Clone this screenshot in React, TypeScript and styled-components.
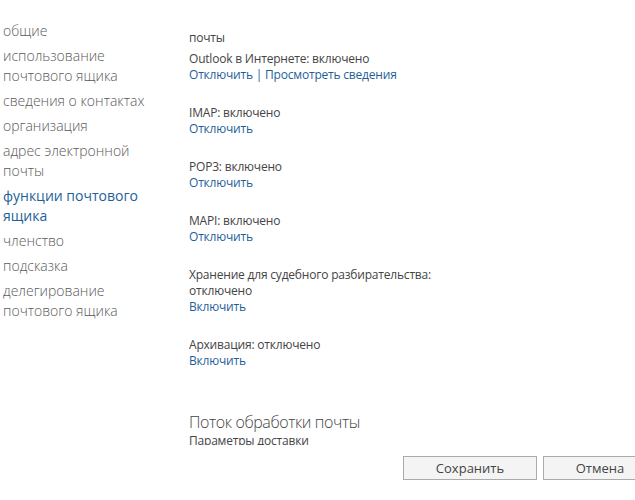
import styled, { createGlobalStyle } from 'styled-components';

const GlobalStyle = createGlobalStyle`
  html, body {
    margin: 0;
    padding: 0;
    background: #ffffff;
  }
  body {
    font-family: 'Open Sans', 'Noto Sans', sans-serif;
    color: #333333;
    overflow: hidden;
  }
`;

type Feature = {
  label: string;
  status?: string;
  actions: string[];
};

const navItems = [
  'общие',
  'использование почтового ящика',
  'сведения о контактах',
  'организация',
  'адрес электронной почты',
  'функции почтового ящика',
  'членство',
  'подсказка',
  'делегирование почтового ящика',
];

const activeNav = 'функции почтового ящика';

const features: Feature[] = [
  { label: 'Outlook в Интернете: включено', actions: ['Отключить', 'Просмотреть сведения'] },
  { label: 'IMAP: включено', actions: ['Отключить'] },
  { label: 'POP3: включено', actions: ['Отключить'] },
  { label: 'MAPI: включено', actions: ['Отключить'] },
  { label: 'Хранение для судебного разбирательства:', status: 'отключено', actions: ['Включить'] },
  { label: 'Архивация: отключено', actions: ['Включить'] },
];

export default function App() {
  return (
    <>
      <GlobalStyle />
      <Page>
        <Body>
          <Nav>
            {navItems.map((item) => (
              <NavItem key={item} $active={item === activeNav}>
                {item}
              </NavItem>
            ))}
          </Nav>

          <Content>
            <SectionTail>почты</SectionTail>
            {features.map((f) => (
              <Feature key={f.label}>
                <Line>{f.label}</Line>
                {f.status && <Line>{f.status}</Line>}
                <Links>
                  {f.actions.map((a, i) => (
                    <span key={a}>
                      {i > 0 && ' | '}
                      <Link href="#">{a}</Link>
                    </span>
                  ))}
                </Links>
              </Feature>
            ))}
            <SectionTitle>Поток обработки почты</SectionTitle>
            <Line>Параметры доставки</Line>
          </Content>
        </Body>

        <Footer>
          <Button>Сохранить</Button>
          <Button $width={114}>Отмена</Button>
        </Footer>
      </Page>
    </>
  );
}

const Page = styled.div`
  width: 635px;
  height: 500px;
  display: grid;
  grid-template-rows: 445px 1fr;
  overflow: hidden;
`;

const Body = styled.div`
  display: grid;
  grid-template-columns: 189px 1fr;
  overflow: hidden;
`;

const Nav = styled.ul`
  list-style: none;
  margin: 0;
  padding: 21px 0 0 3px;
  display: flex;
  flex-direction: column;
  gap: 5px;
`;

const NavItem = styled.li<{ $active?: boolean }>`
  font-size: 14px;
  line-height: 20px;
  width: 150px;
  color: ${(p) => (p.$active ? '#1e5f99' : '#5a5a5a')};
  font-weight: ${(p) => (p.$active ? 400 : 300)};
`;

const Content = styled.div`
  padding-top: 30px;
  font-size: 12px;
  line-height: 16px;
  letter-spacing: -0.2px;
  overflow: hidden;
`;

const SectionTail = styled.div`
  color: #444444;
  margin-bottom: 5px;
`;

const Feature = styled.div`
  margin-bottom: 22px;
`;

const Line = styled.div`
  color: #444444;
`;

const Links = styled.div`
  color: #1e5f99;
`;

const Link = styled.a`
  color: #1e5f99;
  text-decoration: none;
`;

const SectionTitle = styled.div`
  margin-top: 42px;
  font-size: 16px;
  line-height: 22px;
  font-weight: 300;
  letter-spacing: -0.4px;
  color: #444444;
`;

const Footer = styled.div`
  display: flex;
  gap: 6px;
  padding: 11px 0 0 403px;
  align-items: flex-start;
`;

const Button = styled.button<{ $width?: number }>`
  flex: 0 0 auto;
  width: ${(p) => p.$width ?? 134}px;
  height: 24px;
  border: 1px solid #ababab;
  background: #f4f4f4;
  font-family: inherit;
  font-size: 13px;
  color: #444444;
  padding: 0;
`;
